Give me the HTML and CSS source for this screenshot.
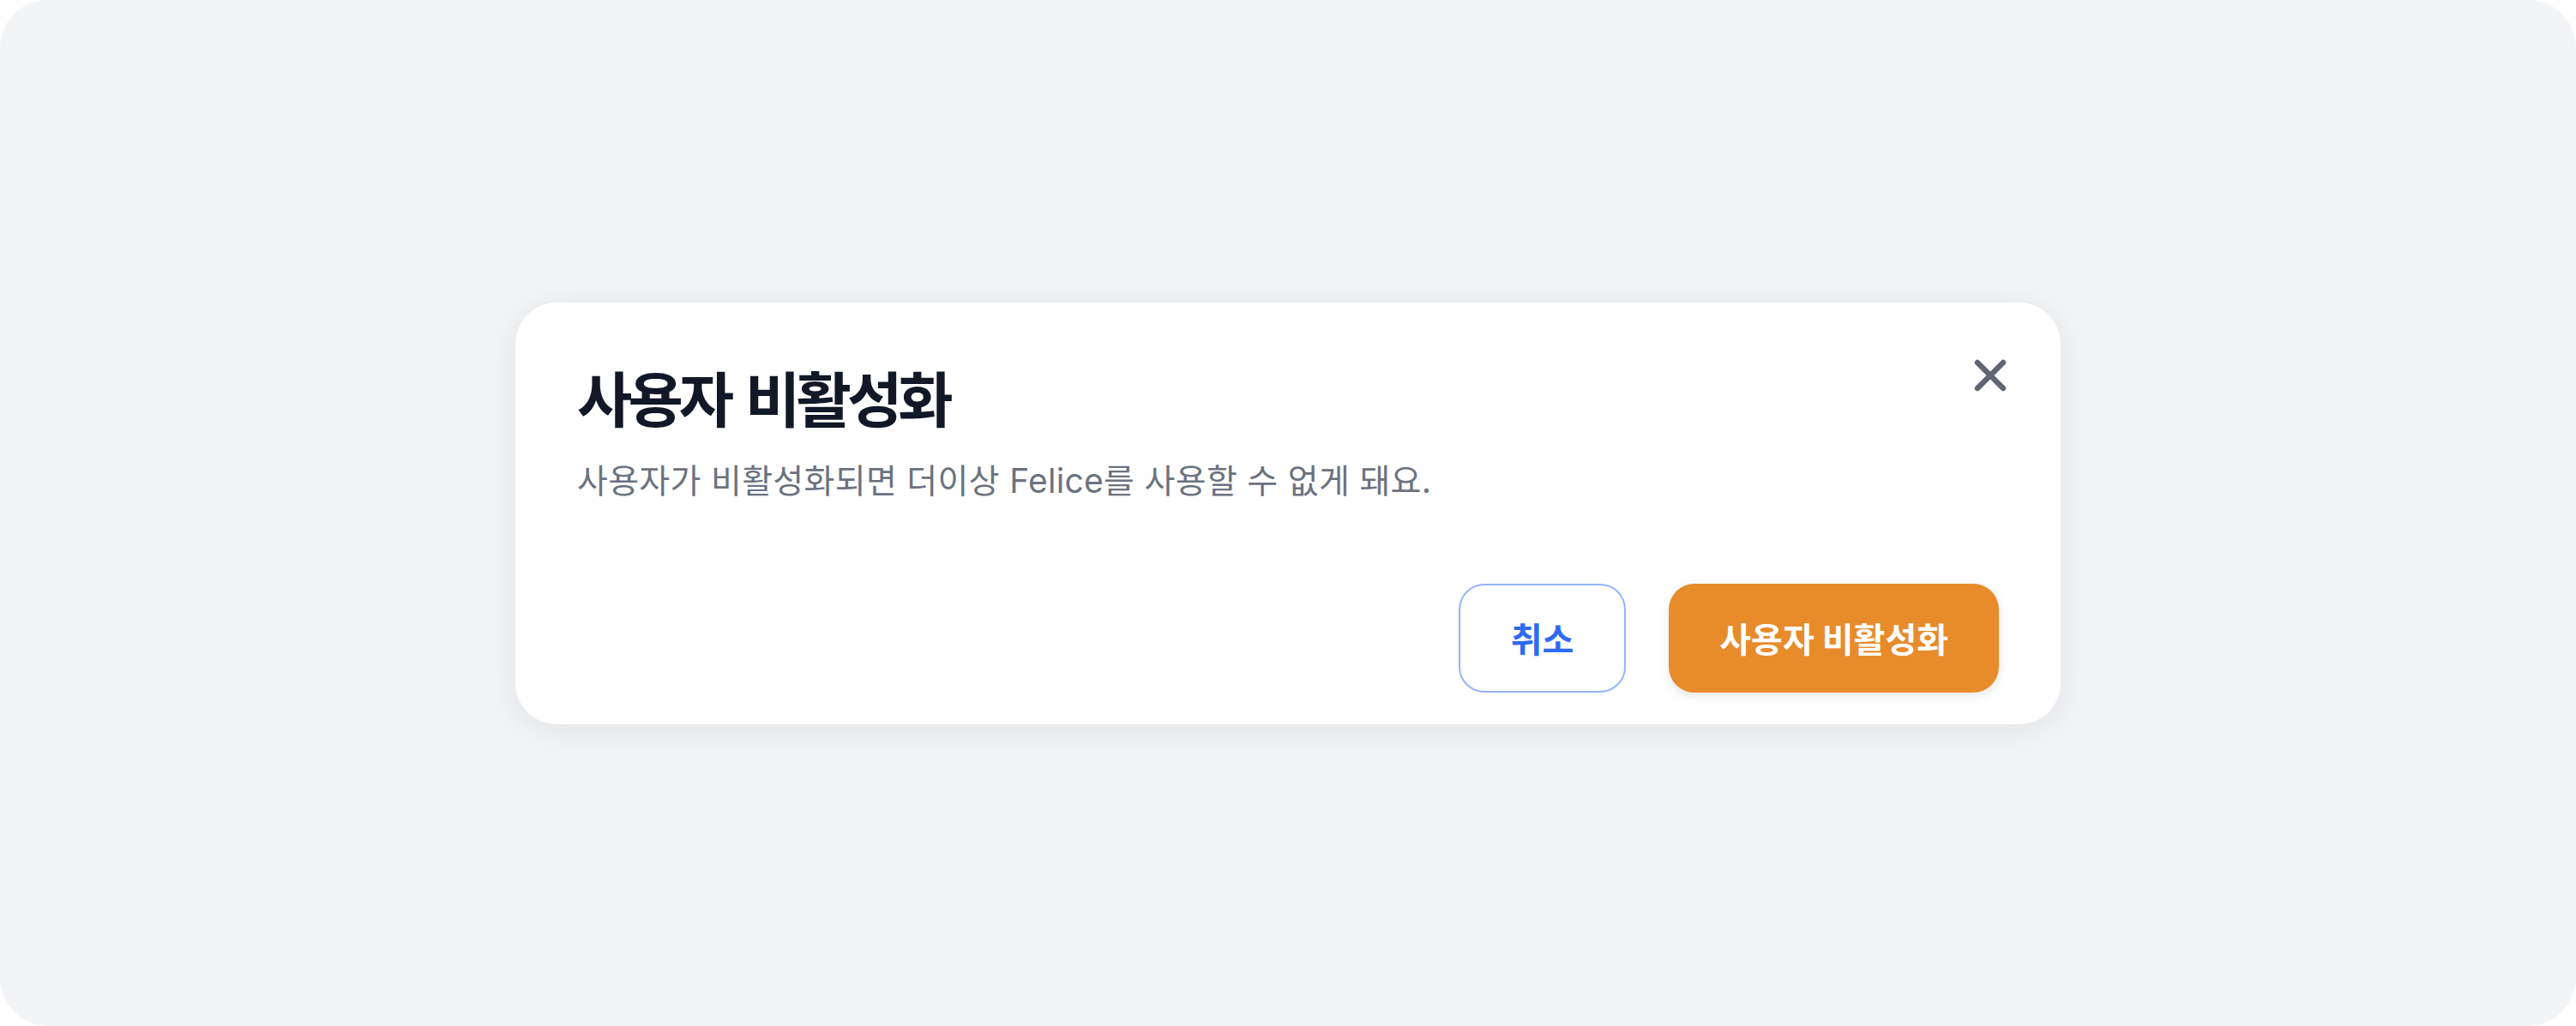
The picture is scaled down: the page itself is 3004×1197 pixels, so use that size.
FILE: index.html
```html
<!DOCTYPE html>
<html>
<head>
  <link rel="stylesheet" href="styles.css">
</head>
<body>
  <div class="screen">
    <div class="dialog">
      <button class="close-btn" aria-label="닫기">
        <svg width="38" height="38" viewBox="0 0 38 38">
          <path d="M4 4L34 34M34 4L4 34" stroke="#5f6572" stroke-width="6.5" stroke-linecap="round" fill="none"/>
        </svg>
      </button>
      <h2 class="dialog-title">사용자 비활성화</h2>
      <p class="dialog-text">사용자가 비활성화되면 더이상 Felice를 사용할 수 없게 돼요.</p>
      <div class="dialog-actions">
        <button class="btn cancel">취소</button>
        <button class="btn confirm">사용자 비활성화</button>
      </div>
    </div>
  </div>
</body>
</html>
```

FILE: styles.css
```css
body {
  margin: 0;
  background: #fff;
  font-family: Inter, "Noto Sans CJK KR", sans-serif;
}

.screen {
  display: flex;
  justify-content: center;
  align-items: center;
  height: 100vh;
  background: #f3f4f6;
  border-radius: 56px;
}

.dialog {
  position: relative;
  width: 1802px;
  box-sizing: border-box;
  padding: 66px 72px 37px;
  background: #fff;
  border-radius: 48px;
  box-shadow: 0 6px 36px rgba(17, 24, 39, 0.08);
}

.close-btn {
  position: absolute;
  top: 66px;
  right: 63px;
  width: 38px;
  height: 38px;
  padding: 0;
  border: none;
  background: none;
  cursor: pointer;
}

.close-btn svg {
  display: block;
}

.dialog-title {
  margin: 0;
  font-family: "Noto Sans CJK KR", sans-serif;
  font-size: 70px;
  line-height: 88px;
  font-weight: 700;
  letter-spacing: -5px;
  word-spacing: 7px;
  color: #111827;
}

.dialog-text {
  margin: 26px 0 0;
  font-size: 39px;
  line-height: 56px;
  letter-spacing: 0.3px;
  color: #6b7280;
}

.dialog-actions {
  display: flex;
  justify-content: flex-end;
  gap: 50px;
  margin-top: 92px;
}

.btn {
  height: 127px;
  padding: 0 59px;
  font-family: "Noto Sans CJK KR", sans-serif;
  font-size: 40px;
  font-weight: 700;
  border-radius: 30px;
  cursor: pointer;
}

.btn.cancel {
  background: #fff;
  color: #2f6bf2;
  border: 2px solid #93b4fd;
}

.btn.confirm {
  background: #e88b2a;
  color: #fff;
  border: none;
  box-shadow: 0 4px 12px rgba(0, 0, 0, 0.1);
}
```
